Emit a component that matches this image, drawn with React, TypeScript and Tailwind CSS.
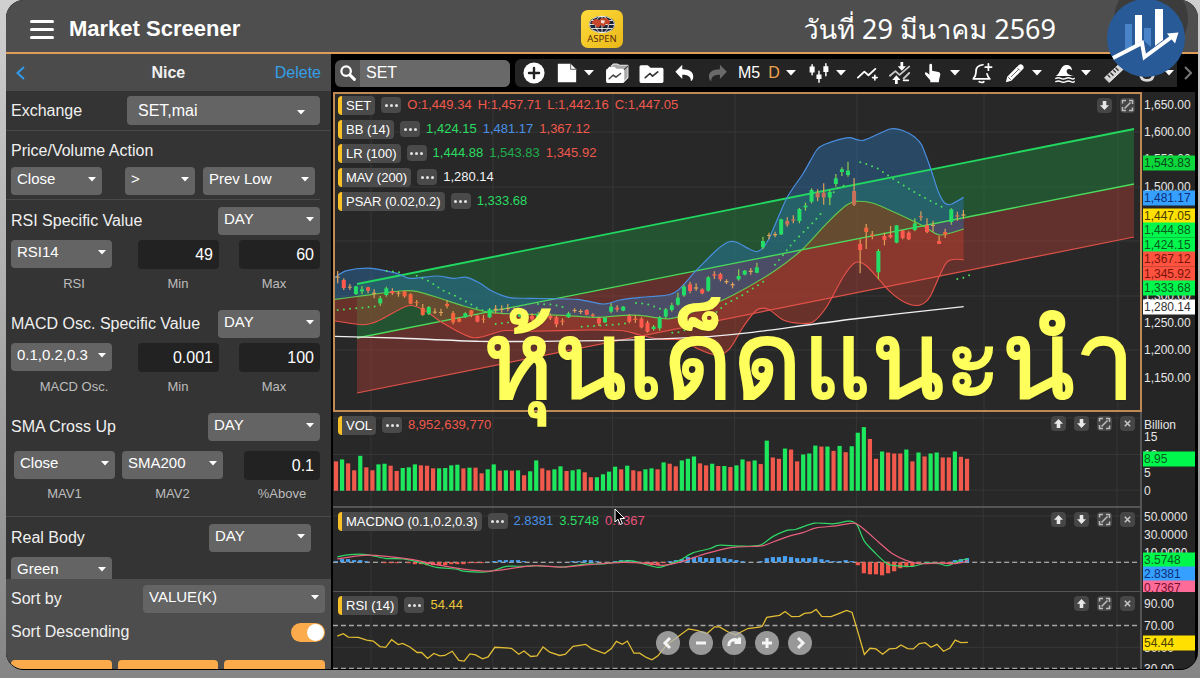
import React from "react";

type Pt = [number, number];

/* ---------- chart data, in plot units ---------- */

const fromA = (pts: Pt[]): Pt[] => pts.map(([x, y]) => [330 + x / 3, 230 + y / 3]);
const fromB = (pts: Pt[]): Pt[] => pts.map(([x, y]) => [640 + x / 3, 110 + y / 3]);
const fromC = (pts: Pt[]): Pt[] => pts.map(([x, y]) => [330 + x / 3, 400 + y / 3]);
const fromD = (pts: Pt[]): Pt[] => pts.map(([x, y]) => [760 + x / 3, 400 + y / 3]);

const line = (pts: Pt[]) => "M" + pts.map(([x, y]) => `${x.toFixed(1)} ${y.toFixed(1)}`).join("L");

const smooth = (p: Pt[], start = "M") => {
  let d = `${start}${p[0][0].toFixed(1)} ${p[0][1].toFixed(1)}`;
  for (let i = 0; i < p.length - 1; i++) {
    const a = p[i - 1] ?? p[i];
    const b = p[i];
    const c = p[i + 1];
    const e = p[i + 2] ?? c;
    const k = 7;
    d += `C${(b[0] + (c[0] - a[0]) / k).toFixed(1)} ${(b[1] + (c[1] - a[1]) / k).toFixed(1)} ${(c[0] - (e[0] - b[0]) / k).toFixed(1)} ${(c[1] - (e[1] - b[1]) / k).toFixed(1)} ${c[0].toFixed(1)} ${c[1].toFixed(1)}`;
  }
  return d;
};

const bbUpper: Pt[] = [
  ...fromA([[10, 146], [50, 122], [125, 115], [200, 130], [240, 145], [320, 138], [370, 145], [410, 142], [450, 160], [490, 185], [540, 203], [600, 205], [740, 208], [820, 222], [870, 210]]),
  ...fromB([[0, 562], [100, 550], [165, 485], [230, 420], [265, 396], [290, 397], [330, 418], [355, 424], [385, 390], [440, 265], [490, 190], [530, 120], [555, 103], [625, 83], [670, 91], [750, 57], [790, 62], [825, 82], [845, 105], [870, 170], [895, 245], [915, 280], [935, 282], [971, 262]]),
];
const bbMid: Pt[] = [
  ...fromA([[10, 209], [100, 197], [210, 183], [260, 184], [330, 205], [400, 228], [480, 247], [560, 252], [700, 256], [800, 262], [880, 256]]),
  ...fromB([[0, 616], [90, 626], [180, 598], [280, 555], [400, 485], [485, 420], [560, 340], [620, 285], [650, 274], [700, 280], [770, 310], [850, 348], [900, 375], [971, 357]]),
];
const bbLower: Pt[] = [
  ...fromA([[10, 272], [100, 284], [150, 270], [235, 227], [290, 245], [340, 280], [430, 323], [520, 302], [600, 304], [780, 300], [880, 302]]),
  ...fromB([[0, 675], [60, 688], [130, 690], [170, 715], [230, 735], [270, 715], [310, 650], [350, 600], [385, 598], [430, 630], [480, 640], [520, 635], [560, 590], [610, 500], [645, 458], [680, 468], [750, 545], [800, 580], [840, 585], [870, 560], [920, 457], [971, 449]]),
];
const mav: Pt[] = [
  ...fromA([[10, 319], [200, 324], [450, 334], [700, 333]]),
  ...fromB([[30, 688], [200, 680], [330, 668], [640, 627], [971, 590]]),
];
const psar: Pt[][] = [
  fromA([[23, 240], [150, 228]]),
  fromA([[170, 123], [225, 128]]),
  fromA([[260, 137], [300, 155], [335, 180], [370, 195], [405, 213], [440, 233], [460, 242]]),
  fromA([[497, 282], [600, 270]]),
  fromA([[624, 222], [670, 224], [715, 235]]),
  fromA([[755, 290], [880, 282], [895, 277]]),
  fromA([[918, 219], [950, 222], [990, 236]]),
  fromB([[97, 668], [115, 667], [152, 655], [188, 632], [225, 610], [260, 580], [300, 560], [370, 515]]),
  fromB([[405, 464], [424, 442], [460, 396], [515, 342], [552, 300]]),
  fromB([[570, 262], [588, 238], [606, 227], [625, 228]]),
  fromB([[661, 157], [680, 162], [716, 177], [734, 190], [770, 214], [825, 247], [860, 267], [916, 296]]),
  fromB([[952, 507], [970, 503], [990, 495]]),
];

type Candle = [string, number, number, number, number];
const early: Candle[] = [
  ["t", 123, 140, 143, 160], ["r", 145, 150, 174, 180], ["t", 162, 170, 173, 180], ["g", 167, 169, 192, 195], ["g", 168, 178, 184, 193],
  ["r", 170, 172, 182, 190], ["t", 178, 188, 192, 205], ["g", 198, 205, 220, 228], ["g", 170, 175, 195, 200], ["r", 175, 183, 190, 195],
  ["t", 183, 188, 191, 200], ["o", 182, 184, 199, 203], ["o", 190, 193, 221, 223], ["o", 210, 216, 219, 228], ["o", 222, 234, 255, 257],
  ["g", 228, 231, 251, 255], ["t", 235, 245, 248, 252], ["t", 236, 246, 249, 258], ["o", 210, 222, 228, 235], ["o", 243, 249, 277, 283],
  ["o", 262, 265, 275, 277], ["g", 247, 250, 262, 264], ["o", 240, 241, 256, 262], ["r", 255, 257, 275, 277], ["o", 255, 266, 269, 279],
  ["g", 234, 238, 262, 265], ["t", 225, 236, 240, 250], ["t", 226, 236, 239, 248], ["t", 222, 234, 237, 244], ["r", 232, 240, 262, 267],
  ["g", 245, 250, 260, 262], ["r", 242, 250, 262, 270], ["r", 250, 258, 268, 272], ["g", 245, 252, 262, 268], ["r", 248, 254, 262, 270],
  ["r", 250, 258, 265, 270], ["r", 258, 262, 283, 292], ["o", 265, 272, 276, 286], ["g", 245, 250, 262, 264], ["t", 235, 240, 243, 248],
  ["t", 238, 243, 246, 252], ["r", 238, 240, 254, 256], ["o", 250, 254, 258, 262], ["r", 260, 265, 280, 288], ["g", 262, 263, 277, 279],
  ["g", 220, 230, 245, 250], ["r", 226, 233, 238, 245], ["g", 228, 230, 242, 244], ["r", 252, 258, 275, 280], ["o", 255, 266, 270, 278],
];
const late: Candle[] = [
  ["r", 622, 626, 652, 655], ["r", 632, 638, 665, 668], ["g", 645, 650, 657, 662], ["g", 618, 622, 655, 662], ["g", 594, 598, 620, 625],
  ["g", 578, 586, 600, 605], ["g", 548, 563, 584, 587], ["g", 525, 530, 556, 560], ["r", 515, 523, 543, 550], ["t", 520, 532, 536, 543],
  ["r", 535, 538, 550, 553], ["g", 498, 502, 542, 545], ["r", 484, 493, 497, 507], ["r", 488, 492, 508, 514], ["t", 508, 513, 517, 522],
  ["t", 517, 522, 526, 535], ["g", 478, 498, 508, 512], ["g", 480, 482, 494, 496], ["t", 474, 482, 486, 494], ["g", 458, 472, 488, 490],
  ["g", 380, 393, 412, 418], ["t", 368, 375, 378, 388], ["t", 365, 372, 376, 382], ["g", 326, 328, 373, 375], ["p", 322, 333, 344, 350],
  ["p", 316, 328, 332, 340], ["g", 294, 297, 333, 340], ["g", 278, 287, 292, 302], ["g", 235, 240, 275, 280], ["p", 238, 248, 262, 274],
  ["p", 220, 248, 262, 284], ["g", 240, 246, 262, 286], ["g", 192, 205, 222, 230], ["g", 172, 178, 186, 198], ["g", 155, 182, 195, 200],
  ["p", 204, 243, 284, 288], ["r", 388, 402, 420, 490], ["o", 342, 353, 366, 417], ["o", 363, 373, 378, 388], ["g", 417, 423, 487, 508],
  ["r", 368, 378, 390, 406], ["r", 348, 375, 382, 385], ["g", 345, 346, 398, 400], ["r", 360, 362, 384, 388], ["r", 364, 368, 388, 390],
  ["g", 325, 340, 360, 364], ["p", 304, 318, 322, 332], ["r", 325, 346, 366, 370], ["t", 332, 345, 348, 365], ["r", 378, 393, 402, 402],
  ["o", 356, 366, 374, 384], ["g", 295, 298, 336, 344], ["p", 305, 316, 320, 332], ["t", 300, 313, 317, 326],
];
const candles = [
  ...early.map(([c, ...v]) => ({ c, v: v.map((n) => 230 + n / 3) })),
  ...late.map(([c, ...v]) => ({ c, v: v.map((n) => 110 + n / 3) })),
];
const candleFill: Record<string, string> = { g: "#22dd66", r: "#ff5a4d", o: "#f4653f", t: "#d9a35c", p: "#c9705a" };

const volumes =
  "R186 G180 R192 R213 G169 R204 R213 G195 G193 R199 R215 G206 G204 G195 R198 R199 R207 G207 G206 G198 G196 R207 G205 R205 R222 G210 G195 R214 G213 R214 G213 R228 G216 G183 R207 R213 G210 G201 R215 G213 G210 R219 R234 G234 G225 G217 G202 R210 G199 R213 R216 G210 G207 R210 G189 R193 R201 G183 G178 G171 R192 R198 G193 R200 G200 R203 G198 G180 R186 G183 R194 G123 R174 R178 G147 R150 R186 G165 G162 G138 R141 G141 R154 G139 R158 G140 G99 G82 R118 R178 G156 R159 R162 R162 G150 R186 G159 R171 G162 G159 R174 R174 G156 R172 R178".split(" ");

const histogram = [
  1, 3, 3, 2, 2, 1, 0, 0, -1, -1, -1, 0, -1, -2, -2, -3, -3, -3, -3, -2, -2, -2, -1, -1, -1, 0, 1, 2, 2, 2, 2, 1, 0, 0, 0, 0, 0, 0, 0, 1, 1, 2, 2, 1, 0, 0,
  1, 2, 2, 1, -1, -2, -3, -3, -1, 1, 2, 3, 5, 5, 5, 4, 4, 5, 4, 3, 2, 1, 0, 0, 1, 4, 5, 5, 6, 5, 4, 4, 4, 5, 3, 2, 1, 1, 2, 1, -3, -11, -12, -12, -13, -11, -9, -6, -5, -4,
  -1, 0, 0, 0, -1, -2, 2, 3, 4,
];

const macdLine: Pt[] = [
  ...fromC([[22, 472], [60, 465], [110, 465], [165, 476], [220, 478], [270, 488], [320, 503], [380, 508], [400, 514], [475, 516], [530, 500], [580, 500], [620, 498], [700, 502], [770, 493], [820, 493], [900, 483], [940, 492], [985, 503], [1010, 497], [1050, 482], [1090, 460], [1140, 448], [1170, 437], [1230, 440]]),
  ...fromD([[0, 438], [40, 412], [80, 394], [110, 390], [165, 372], [220, 374], [265, 366], [280, 367], [295, 380], [315, 425], [350, 463], [380, 490], [400, 497], [460, 500], [500, 490], [540, 492], [565, 498], [600, 483], [626, 478]]),
];
const signalLine: Pt[] = [
  ...fromC([[22, 478], [100, 467], [170, 470], [250, 480], [320, 495], [400, 508], [480, 514], [560, 504], [620, 498], [700, 502], [780, 495], [880, 488], [960, 492], [1000, 497], [1060, 485], [1120, 465], [1200, 445]]),
  ...fromD([[0, 440], [20, 436], [80, 413], [130, 400], [170, 386], [230, 380], [285, 372], [320, 395], [360, 430], [400, 463], [440, 482], [480, 492], [540, 490], [580, 492], [610, 488], [626, 482]]),
];
const rsiLine: Pt[] = [
  ...fromC([[22, 710], [40, 703], [55, 713], [85, 714], [110, 722], [130, 725], [150, 742], [167, 744], [185, 721], [205, 736], [218, 732], [240, 743], [262, 760], [275, 760], [293, 778], [312, 763], [330, 770], [345, 769], [367, 756], [387, 784], [403, 786], [420, 764], [437, 767], [458, 779], [475, 773], [495, 744], [545, 747], [567, 765], [583, 755], [603, 772], [622, 770], [640, 743], [660, 759], [690, 769], [707, 765], [730, 741], [768, 735], [785, 748], [825, 763], [845, 748], [860, 726], [878, 735], [893, 725], [913, 762], [930, 762], [950, 775], [967, 782], [985, 770], [1010, 738], [1050, 708], [1077, 688], [1105, 693], [1132, 703], [1155, 682], [1170, 682], [1195, 697], [1218, 706], [1255, 687]]),
  ...fromD([[0, 683], [8, 680], [22, 653], [60, 647], [77, 635], [97, 651], [120, 650], [135, 641], [155, 639], [170, 629], [187, 650], [215, 651], [240, 641], [262, 632], [278, 638], [295, 695], [315, 766], [332, 747], [350, 749], [370, 765], [390, 749], [410, 747], [425, 737], [445, 748], [462, 749], [480, 733], [498, 730], [515, 744], [533, 735], [553, 756], [572, 746], [588, 722], [605, 730], [626, 729]]),
];

const gridX = [371, 493, 613, 735, 857, 984, 1118];

/* ---------- chart panels ---------- */

function Plot({ left = 333, width = 808, top, height, rows, children }: { left?: number; width?: number; top: number; height: number; rows: number[]; children: React.ReactNode }) {
  return (
    <svg className="absolute inset-0 h-full w-full" viewBox={`${left} ${top} ${width} ${height}`} preserveAspectRatio="none" aria-hidden="true">
      <g stroke="#363636" strokeWidth="1">
        {gridX.map((x) => (
          <path key={x} d={`M${x} ${top}V${top + height}`} />
        ))}
        {rows.map((y) => (
          <path key={y} d={`M333 ${y}H1142`} />
        ))}
      </g>
      {children}
    </svg>
  );
}

function PricePlot() {
  return (
    <Plot left={335} width={805} top={94} height={316} rows={[132, 187, 241, 296, 350]}>
      <path d="M357 284L1134 129V184L357 338Z" fill="#1e7a3a" fillOpacity="0.52" />
      <path d="M357 338L1134 184V237L357 393Z" fill="#a83c34" fillOpacity="0.46" />
      <path d={smooth(bbUpper) + smooth([...bbMid].reverse(), "L") + "Z"} fill="#2c74b8" fillOpacity="0.42" />
      <path d={smooth(bbMid) + smooth([...bbLower].reverse(), "L") + "Z"} fill="#c04030" fillOpacity="0.42" />
      <g fill="none" strokeLinejoin="round">
        <path d="M357 284L1134 129" stroke="#22d860" strokeWidth="1.8" />
        <path d="M357 338L1134 184" stroke="#4ade5c" strokeWidth="1.3" />
        <path d="M357 393L1134 237" stroke="#e05248" strokeWidth="1.2" />
        <path d={smooth(bbUpper)} stroke="#4a8fe0" strokeWidth="1.2" />
        <path d={smooth(bbMid)} stroke="#62c84e" strokeWidth="1.2" />
        <path d={smooth(bbLower)} stroke="#e8524a" strokeWidth="1.1" />
        <path d={smooth(mav)} stroke="#f0eeee" strokeWidth="1.3" />
        {psar.map((p, i) => (
          <path key={i} d={line(p)} stroke="#4ade5c" strokeWidth="2" strokeLinecap="round" strokeDasharray="0 6.2" />
        ))}
      </g>
      {candles.map(({ c, v }, i) => {
        const x = 337.7 + i * 6.075;
        return (
          <g key={i}>
            <path d={`M${x} ${v[0]}V${v[3]}`} stroke={c === "g" ? "#8fc94e" : "#e0a055"} strokeWidth="1.2" />
            <rect x={x - 2} y={v[1]} width="4" height={v[2] - v[1]} fill={candleFill[c]} />
          </g>
        );
      })}
    </Plot>
  );
}

function VolumePlot() {
  return (
    <Plot top={412} height={95} rows={[418, 455, 491]}>
      {volumes.map((v, i) => {
        const h = (275 - Number(v.slice(1))) / 3;
        return <rect key={i} x={333.9 + i * 6.075} y={491.6 - h} width="4.2" height={h} fill={v[0] === "R" ? "#f0594c" : "#1de75c"} />;
      })}
    </Plot>
  );
}

function MacdPlot() {
  return (
    <Plot top={509} height={82} rows={[517]}>
      <path d="M333 562.5H1142" stroke="#c9c9c9" strokeWidth="1" strokeDasharray="5 3" />
      {histogram.map((h, i) => (
        <rect key={i} x={333.9 + i * 6.075} y={h > 0 ? 562.5 - h : 562.5} width="4.2" height={Math.abs(h)} fill={h > 0 ? "#4aa0f0" : "#f0594c"} />
      ))}
      <path d={smooth(macdLine)} fill="none" stroke="#2fd866" strokeWidth="1.2" />
      <path d={smooth(signalLine)} fill="none" stroke="#e8607c" strokeWidth="1.2" />
    </Plot>
  );
}

function RsiPlot() {
  return (
    <Plot top={592} height={78} rows={[648]}>
      <path d="M333 626H1142M333 669.5H1142" stroke="#a9a3a3" strokeWidth="1.4" strokeDasharray="5 3" />
      <path d={line(rsiLine)} fill="none" stroke="#e3bd33" strokeWidth="1.3" />
    </Plot>
  );
}

const tagTone: Record<string, string> = {
  green: "bg-[#00f84c] text-[#0b5a20]",
  lime: "bg-[#0cd83c] text-[#0a4a1a]",
  blue: "bg-[#35a0ff] text-[#0c2f78]",
  yellow: "bg-[#ffe000] text-[#4a3c00]",
  red: "bg-[#ff5340] text-[#7a1208]",
  white: "bg-white text-[#333333]",
  pink: "bg-[#ff6b98] text-[#7a1030]",
};

type Tick = { text: string; at: number; tone?: string };

function Axis({ ticks, height }: { ticks: Tick[]; height: number }) {
  return (
    <div className="relative w-[53px] shrink-0 overflow-hidden bg-[#252525] text-xs leading-[15px] text-[#e6e6e6]">
      {ticks.map((t) => (
        <span
          key={t.text}
          className={`absolute left-px w-[52px] -translate-y-1/2 px-px ${t.tone ? tagTone[t.tone] : ""}`}
          style={{ top: `${(t.at / height) * 100}%` }}
        >
          {t.text}
        </span>
      ))}
    </div>
  );
}

const valueTone: Record<string, string> = {
  red: "text-[#f0594c]",
  green: "text-[#2bdc62]",
  deep: "text-[#1fae4c]",
  blue: "text-[#4a90e6]",
  white: "text-[#f2f2f2]",
  pink: "text-[#e8507c]",
  gold: "text-[#e8c53a]",
};

function Legend({ name, values }: { name: string; values: [string, string][] }) {
  return (
    <div className="flex h-5 items-center gap-1.5 text-[13px] leading-5">
      <button className="h-[19px] rounded border-l-4 border-[#f6c026] bg-[#4b4b4b] px-1 leading-[19px] whitespace-nowrap text-white">{name}</button>
      <button className="flex h-4 w-5 items-center justify-center gap-0.5 rounded bg-[#4a4a4a]" aria-label={`${name} options`}>
        <span className="size-[3px] rounded-full bg-[#e4e4e4]" />
        <span className="size-[3px] rounded-full bg-[#e4e4e4]" />
        <span className="size-[3px] rounded-full bg-[#e4e4e4]" />
      </button>
      {values.map(([v, tone]) => (
        <span key={v} className={`whitespace-nowrap ${valueTone[tone]}`}>
          {v}
        </span>
      ))}
    </div>
  );
}

const controlPath: Record<string, string> = {
  up: "M7.5 3L12 7.8H9.3V12H5.7V7.8H3Z",
  down: "M7.5 12L3 7.2H5.7V3H9.3V7.2H12Z",
};

function Controls({ items }: { items: string[] }) {
  return (
    <div className="absolute top-1 right-[5px] flex gap-2">
      {items.map((k) => (
        <button key={k} aria-label={k} className="flex size-[15px] items-center justify-center rounded-sm bg-[#464646]">
          <svg viewBox="0 0 15 15" className="size-[15px]">
            {controlPath[k] && <path d={controlPath[k]} fill="#e8e8e8" />}
            {k === "expand" && (
              <path d="M2.5 5.5V2.5H6M9 2.5H12.5V6M12.5 9.5V12.5H9M6 12.5H2.5V9M4.5 10.5L10.5 4.5" fill="none" stroke="#bdbdbd" strokeWidth="1.5" />
            )}
            {k === "close" && <path d="M4.8 4.8L10.2 10.2M10.2 4.8L4.8 10.2" stroke="#c8c8c8" strokeWidth="1.5" />}
          </svg>
        </button>
      ))}
    </div>
  );
}

/* ---------- toolbar ---------- */

const Caret = () => (
  <svg viewBox="0 0 10 6" className="h-1.5 w-2.5 shrink-0" aria-hidden="true">
    <path d="M0 0H10L5 5.5Z" fill="#fff" />
  </svg>
);

function Icon({ children, className = "size-[22px]" }: { children: React.ReactNode; className?: string }) {
  return (
    <svg viewBox="0 0 24 24" className={`${className} shrink-0`} fill="none" stroke="#fff" strokeWidth="2" strokeLinecap="round" strokeLinejoin="round" aria-hidden="true">
      {children}
    </svg>
  );
}

function Tool({ label, width = "w-8", caret, children }: { label: string; width?: string; caret?: boolean; children: React.ReactNode }) {
  return (
    <button aria-label={label} className={`${width} flex h-7 shrink-0 items-center justify-center ${caret ? "gap-1.5" : ""} text-[15px] text-white`}>
      {children}
      {caret && <Caret />}
    </button>
  );
}

function Toolbar() {
  return (
    <div className="flex h-[38px] shrink-0 items-center gap-[5px] bg-black pr-1 pl-1">
      <label className="flex h-[27px] w-[175px] shrink-0 items-center overflow-hidden rounded-md bg-[#505050]">
        <span className="flex w-[25px] justify-center">
          <Icon className="size-[18px]">
            <circle cx="9.5" cy="9.5" r="6.3" strokeWidth="3" />
            <path d="M14.5 14.5L20.5 20.5" strokeWidth="4" />
          </Icon>
        </span>
        <span className="sr-only">Symbol</span>
        <input className="h-full min-w-0 flex-1 bg-[#696969] px-1.5 text-base text-white outline-none" defaultValue="SET" />
      </label>
      <div className="flex h-7 min-w-0 flex-1 items-center overflow-hidden rounded-l-md bg-[#242424] pl-[3px]">
        <Tool label="Add">
          <Icon>
            <circle cx="12" cy="12" r="11.500" fill="#fff" stroke="none" />
            <path d="M12 6.5V17.5M6.5 12H17.5" stroke="#222" strokeWidth="2.6" />
          </Icon>
        </Tool>
        <Tool label="New" width="w-[50px]" caret>
          <Icon>
            <path d="M2 2H16L22 8V22H2Z" fill="#fff" stroke="none" />
            <path d="M16 2V8H22" stroke="#555" strokeWidth="1" />
          </Icon>
        </Tool>
        <Tool label="Open all" width="w-[34px]">
          <Icon className="size-[25px]">
            <path d="M6 5L8 3H12L14 4H22V16L18 20" fill="#a8a8a8" stroke="#e8e8e8" strokeWidth="1" />
            <path d="M1 9Q1 7.500 2.500 7.500L4 5.500H9L11 7.500H17Q18.500 7.500 18.500 9V19.500Q18.500 21 17 21H2.500Q1 21 1 19.500Z" fill="#fff" stroke="none" />
            <path d="M18.500 8L22 5" stroke="#444" strokeWidth="1" />
            <path d="M4 17L8 13.500L10.500 15.500L15 12" stroke="#444" strokeWidth="1.400" />
          </Icon>
        </Tool>
        <Tool label="Open" width="w-[34px]">
          <Icon className="size-[25px]">
            <path d="M.5 5.500Q.5 4 2 4H8.500L11 6.500H22Q23.500 6.500 23.500 8V19.500Q23.500 21 22 21H2Q.5 21 .5 19.500Z" fill="#fff" stroke="none" />
            <path d="M6 16L10.500 12L13 14.500L18 10.500" stroke="#333" strokeWidth="1.600" />
          </Icon>
        </Tool>
        <Tool label="Undo" width="w-[34px]">
          <Icon>
            <path d="M9 3V8C17 8 21 11 21 16C21 18 20 20 18.500 21C18.500 16 15 14 9 14V18.500L1.500 10.500Z" fill="#fff" stroke="none" />
          </Icon>
        </Tool>
        <Tool label="Redo" width="w-[34px]">
          <Icon>
            <path d="M13 3V8C5 8 1 11 1 16C1 18 2 20 3.500 21C3.500 16 7 14 13 14V18.500L20.500 10.500Z" fill="#6a6a6a" stroke="none" />
          </Icon>
        </Tool>
        <Tool label="5 minutes" width="w-[26px]">
          <span className="text-base">M5</span>
        </Tool>
        <Tool label="Period" width="w-10" caret>
          <span className="text-base text-[#f0a04a]">D</span>
        </Tool>
        <Tool label="Chart type" width="w-[50px]" caret>
          <Icon>
            <path d="M4.500 3V14M12 10V22M19.500 2V15" strokeWidth="1.600" />
            <path d="M4.500 5V11.500M12 13.500V18.500M19.500 4.500V11" strokeWidth="5.500" strokeLinecap="butt" />
          </Icon>
        </Tool>
        <Tool label="Add indicator">
          <Icon>
            <path d="M1 17L8 10.500L12.500 14.500L20 7.500" strokeWidth="2" />
            <path d="M19.500 14.500V19.500M17 17H22" strokeWidth="1.800" />
          </Icon>
        </Tool>
        <Tool label="Compare">
          <Icon>
            <path d="M1 15L7 10L11.500 14L22 5M16 18L22 12" strokeWidth="2" stroke="#c8c8c8" />
            <path d="M15.500 0V4.500H18.500L14 9.500L9.500 4.500H12.500V0ZM6.500 24V19.500H3.500L8 14.500L12.500 19.500H9.500V24Z" fill="#fff" stroke="none" />
            <path d="M16 20H21" strokeWidth="2" />
          </Icon>
        </Tool>
        <Tool label="Pointer" width="w-[50px]" caret>
          <Icon>
            <path d="M8 3.500Q8 2 9.500 2T11 3.500V9.500L18 11Q20 11.500 20 13.500L18.500 20V22H9V20L3.500 13.500Q2.500 12 4 11.300Q5.500 11 8 14Z" fill="#fff" stroke="none" />
          </Icon>
        </Tool>
        <Tool label="Alert">
          <Icon>
            <path d="M13 3Q5 4 5.500 11Q5.500 15 2.500 18.500H20.500Q18 16 17.500 13M9 21.500Q12 23 14 21.500" strokeWidth="1.900" />
            <path d="M19 2V9M15.500 5.500H22.500" strokeWidth="1.900" />
          </Icon>
        </Tool>
        <Tool label="Draw" width="w-[50px]" caret>
          <Icon>
            <path d="M2 22L3.500 16L16 3.500Q18 1.500 20.500 3.500Q22.500 6 20.500 8L8 20.500Z" fill="#fff" stroke="none" />
            <path d="M15 7L17 9M5 17L7 19M8 16L16 8" stroke="#555" strokeWidth="1" />
          </Icon>
        </Tool>
        <Tool label="Wave" width="w-[50px]" caret>
          <Icon className="size-5">
            <path d="M1 15.500C6 14 6 4 12.500 2.500C17.500 1.500 20.500 5 20.500 9C18.500 6.500 14.500 6.500 14 9.500C13.700 12.500 17 14.500 23 15.500Z" fill="#fff" stroke="none" />
            <path d="M1 18.500Q4 17 7 18.500T13 18.500T19 18.500T23 18.500M1 22.300Q4 20.800 7 22.300T13 22.300T19 22.300T23 22.300" strokeWidth="1.800" />
          </Icon>
        </Tool>
        <Tool label="Measure">
          <Icon>
            <path d="M2 17L17 3L22 8L7 22Z" fill="#d8d8d8" stroke="#f2f2f2" strokeWidth="1" />
            <path d="M5.500 14.500L7.500 16.500M8.500 12L11 14.500M11.500 9L13.500 11M14 6.500L16.500 9" stroke="#333" strokeWidth="1.500" />
          </Icon>
        </Tool>
        <Tool label="Magnet" width="w-[50px]" caret>
          <Icon>
            <path d="M5 5V13Q5 20 12 20T19 13V5" strokeWidth="3" stroke="#d8d8d8" />
          </Icon>
        </Tool>
      </div>
      <button aria-label="More tools" className="flex h-7 w-3 items-center justify-center">
        <svg viewBox="0 0 8 14" className="h-3.5 w-2">
          <path d="M1 1L7 7L1 13" fill="none" stroke="#777" strokeWidth="2" />
        </svg>
      </button>
    </div>
  );
}

/* ---------- screener form ---------- */

function Drop({ label, value, width }: { label: string; value: string; width: string }) {
  return (
    <span className={`relative flex shrink-0 ${width}`}>
      <select aria-label={label} defaultValue={value} className="h-7 w-full appearance-none rounded bg-[#646464] px-1.5 pb-1 text-[15px] text-white outline-none">
        <option>{value}</option>
      </select>
      <svg viewBox="0 0 10 6" className="pointer-events-none absolute top-2.5 right-1.5 h-[5px] w-2" aria-hidden="true">
        <path d="M0 0H10L5 5.500Z" fill="#fff" />
      </svg>
    </span>
  );
}

function Num({ label, value, width }: { label: string; value: string; width: string }) {
  return <input aria-label={label} defaultValue={value} className={`${width} h-[29px] shrink-0 rounded bg-[#222222] px-1.5 text-right text-base text-white outline-none`} />;
}

function Caption({ width, children }: { width: string; children: React.ReactNode }) {
  return <span className={`${width} shrink-0 text-center text-[13px] leading-5 text-[#bdbdbd]`}>{children}</span>;
}

function RangeFilter({ title, name, setting, min, max }: { title: string; name: string; setting: string; min: string; max: string }) {
  return (
    <div className="flex h-[103px] shrink-0 flex-col pt-[7px] pr-[11px] pl-[5px]">
      <div className="mb-[5px] flex h-7 items-center justify-between">
        <span>{title}</span>
        <Drop label={`${title} period`} value="DAY" width="w-[102px]" />
      </div>
      <div className="flex justify-between">
        <Drop label={name} value={setting} width="w-[101px]" />
        <div className="flex gap-5">
          <Num label={`${name} min`} value={min} width="w-[81px]" />
          <Num label={`${name} max`} value={max} width="w-[81px]" />
        </div>
      </div>
      <div className="mt-[5px] flex">
        <Caption width="w-[126px]">{name}</Caption>
        <Caption width="w-[82px]">Min</Caption>
        <span className="flex-1" />
        <Caption width="w-[92px]">Max</Caption>
      </div>
    </div>
  );
}

function Sidebar() {
  return (
    <aside className="flex w-[325px] shrink-0 flex-col overflow-hidden bg-[#343434] text-base text-[#f0f0f0]">
      <div className="flex h-[37px] shrink-0 items-center justify-between bg-[#4b4b4b] pr-2.5 pl-2.5">
        <button aria-label="Back" className="w-[46px]">
          <svg viewBox="0 0 9 14" className="h-3.5 w-[9px]">
            <path d="M8 1L1.500 7L8 13" fill="none" stroke="#2f9bea" strokeWidth="2" />
          </svg>
        </button>
        <h2 className="font-bold">Nice</h2>
        <button className="text-[#359fe8]">Delete</button>
      </div>
      <div className="flex min-h-0 flex-1 flex-col overflow-hidden">
        <div className="flex h-10 shrink-0 items-center justify-between border-b border-[#4a4a4a] pr-[11px] pl-[5px]">
          <span>Exchange</span>
          <span className="relative flex w-[193px]">
            <select aria-label="Exchange" defaultValue="SET,mai" className="h-[29px] w-full appearance-none rounded bg-[#646464] px-[11px] text-base text-white outline-none">
              <option>SET,mai</option>
            </select>
            <svg viewBox="0 0 10 6" className="pointer-events-none absolute top-3.5 right-[15px] h-[5px] w-2" aria-hidden="true">
              <path d="M0 0H10L5 5.500Z" fill="#fff" />
            </svg>
          </span>
        </div>
        <div className="mr-[11px] flex h-[69px] shrink-0 flex-col border-b border-[#4a4a4a] pt-2 pl-[5px]">
          <span className="h-7 leading-6">Price/Volume Action</span>
          <div className="flex">
            <Drop label="First price" value="Close" width="w-[91px]" />
            <span className="w-[23px]" />
            <Drop label="Comparison" value=">" width="w-[70px]" />
            <span className="w-2" />
            <Drop label="Second price" value="Prev Low" width="w-28" />
          </div>
        </div>
        <RangeFilter title="RSI Specific Value" name="RSI" setting="RSI14" min="49" max="60" />
        <RangeFilter title="MACD Osc. Specific Value" name="MACD Osc." setting="0.1,0.2,0.3" min="0.001" max="100" />
        <div className="flex h-[111px] shrink-0 flex-col border-b border-[#4a4a4a] pt-[7px] pr-[11px] pl-[5px]">
          <div className="mb-2.5 flex h-7 items-center justify-between">
            <span>SMA Cross Up</span>
            <Drop label="SMA period" value="DAY" width="w-[112px]" />
          </div>
          <div className="flex justify-between pl-[3px]">
            <div className="flex gap-[7px]">
              <Drop label="MAV1" value="Close" width="w-[101px]" />
              <Drop label="MAV2" value="SMA200" width="w-[101px]" />
            </div>
            <Num label="Percent above" value="0.1" width="w-[76px]" />
          </div>
          <div className="mt-1 flex justify-between pl-[3px]">
            <div className="flex gap-[7px]">
              <Caption width="w-[101px]">MAV1</Caption>
              <Caption width="w-[101px]">MAV2</Caption>
            </div>
            <Caption width="w-[76px]">%Above</Caption>
          </div>
        </div>
        <div className="flex shrink-0 flex-col gap-[5px] pt-[7px] pr-5 pl-[5px]">
          <div className="flex h-7 items-center justify-between">
            <span>Real Body</span>
            <Drop label="Body period" value="DAY" width="w-[102px]" />
          </div>
          <Drop label="Body colour" value="Green" width="w-[101px]" />
        </div>
      </div>
      <div className="h-[90px] shrink-0 overflow-hidden bg-[#4d4d4d] pt-1 pr-1.5 pl-[5px]">
        <div className="flex h-8 items-center justify-between">
          <span>Sort by</span>
          <Drop label="Sort by" value="VALUE(K)" width="w-[182px]" />
        </div>
        <label className="flex h-[34px] items-center justify-between">
          Sort Descending
          <input type="checkbox" defaultChecked className="peer sr-only" />
          <span className="flex h-[19px] w-[34px] items-center justify-end rounded-full bg-[#fbab4b] px-px">
            <span className="size-[17px] rounded-full bg-white" />
          </span>
        </label>
        <div className="mt-[11px] flex gap-1.5">
          <button aria-label="Save" className="h-8 flex-1 rounded bg-[#fbab4b]" />
          <button aria-label="Reset" className="h-8 flex-1 rounded bg-[#fbab4b]" />
          <button aria-label="Search" className="h-8 flex-1 rounded bg-[#fbab4b]" />
        </div>
      </div>
    </aside>
  );
}

/* ---------- page ---------- */

function AspenLogo() {
  return (
    <svg viewBox="0 0 42 38" className="h-[38px] w-[42px] shrink-0" role="img" aria-label="Aspen">
      <defs>
        <linearGradient id="aspen" x1="0" y1="0" x2="1" y2="1">
          <stop offset="0" stopColor="#ffdc3c" />
          <stop offset="1" stopColor="#e8b818" />
        </linearGradient>
      </defs>
      <rect width="42" height="38" rx="7" fill="url(#aspen)" />
      <ellipse cx="21" cy="14.500" rx="13" ry="8.500" fill="#1c2438" />
      <g fill="none" stroke="#f0eee8" strokeWidth="0.900">
        <ellipse cx="21" cy="14.500" rx="12.600" ry="8.200" />
        <ellipse cx="21" cy="14.500" rx="6.500" ry="8.200" />
        <path d="M21 6.300V22.700M8.400 14.500H33.600M10.500 10.500H31.500M10.500 18.500H31.500" />
      </g>
      <path d="M10 13L14 9L18 10L20 8.500L25 8L29 11L28 15L25 13.500L23 17L20 15L17 18L14 15Z" fill="#c8462a" />
      <path d="M20 10L24 10.500L23 13.500L20 13Z" fill="#f0e0d0" />
      <text x="21" y="32" textAnchor="middle" fontSize="9.500" fill="#5a2a10" fontFamily="'Noto Sans', sans-serif">
        ASPEN
      </text>
    </svg>
  );
}

function BrandBadge() {
  return (
    <svg viewBox="0 0 86 78" className="pointer-events-none absolute top-0 right-[7px] z-20 h-[78px] w-[86px]" aria-hidden="true">
      <circle cx="46" cy="19" r="37" fill="#3c3c3c" />
      <circle cx="41" cy="38" r="39" fill="#285a98" />
      <path d="M20 24H27V48L20 51ZM39 28H46V47L39 41Z" fill="#4a84c8" />
      <path d="M30 15H37V41L30 45ZM50 9H58V40L50 46Z" fill="#fff" />
      <path d="M8 58L37 43L39.500 57L68 36" fill="none" stroke="#fff" strokeWidth="4" />
      <path d="M62 33.500L73.500 32.500L70 43.500Z" fill="#fff" />
    </svg>
  );
}

const navPaths = ["M14 7L9 12L14 17", "M7 12H17", "M7 15A5.500 5.500 0 0 1 16.500 10.500M17.500 6.500V11.500H12.500", "M12 7V17M7 12H17", "M10 7L15 12L10 17"];
const navNames = ["Previous", "Zoom out", "Reset view", "Zoom in", "Next"];

export default function App() {
  return (
    <div className="flex h-screen min-w-[900px] bg-linear-to-b from-[#d0d0d0] to-[#858585] pr-0.5 pb-2 pl-1.5 font-['Liberation_Sans',Arial,sans-serif]">
      <div className="relative flex min-w-0 flex-1 flex-col overflow-hidden rounded-[18px] border-b border-black bg-black">
        <header className="grid h-[54px] shrink-0 grid-cols-[1fr_auto_1fr] items-center border-b-2 border-[#e09c58] bg-[#4e4e4e] pt-1.5">
          <div className="flex items-center gap-[15px] pl-6">
            <button aria-label="Menu" className="flex w-6 flex-col gap-[5px]">
              <span className="h-[3px] rounded-full bg-white" />
              <span className="h-[3px] rounded-full bg-white" />
              <span className="h-[3px] rounded-full bg-white" />
            </button>
            <h1 className="text-[22px] leading-7 font-bold whitespace-nowrap text-white">Market Screener</h1>
          </div>
          <AspenLogo />
          <time dateTime="2026-03-29" className="justify-self-end pr-[142px] font-['Noto_Sans','Waree','Loma','Garuda','Noto_Sans_Thai_Looped','Noto_Sans_Thai',sans-serif] text-[27px] leading-10 whitespace-nowrap text-white">
            วันที่ 29 มีนาคม 2569
          </time>
        </header>
        <BrandBadge />
        <div className="flex min-h-0 flex-1">
          <Sidebar />
          <main className="flex min-w-0 flex-1 flex-col">
            <Toolbar />
            <div className="relative grid min-h-0 flex-1 grid-rows-[320fr_96fr_84fr_77fr] pr-[3px] pl-0.5">
              <section className="flex min-h-0">
                <div className="relative min-w-0 flex-1 border-2 border-[#c08a54] bg-[#282828]">
                  <PricePlot />
                  <div className="absolute top-px left-[3px] flex flex-col gap-1">
                    <Legend name="SET" values={[["O:1,449.34", "red"], ["H:1,457.71", "red"], ["L:1,442.16", "red"], ["C:1,447.05", "red"]]} />
                    <Legend name="BB (14)" values={[["1,424.15", "green"], ["1,481.17", "blue"], ["1,367.12", "red"]]} />
                    <Legend name="LR (100)" values={[["1,444.88", "green"], ["1,543.83", "deep"], ["1,345.92", "red"]]} />
                    <Legend name="MAV (200)" values={[["1,280.14", "white"]]} />
                    <Legend name="PSAR (0.02,0.2)" values={[["1,333.68", "green"]]} />
                  </div>
                  <Controls items={["down", "expand"]} />
                </div>
                <Axis
                  height={320}
                  ticks={[
                    { text: "1,650.00", at: 13 }, { text: "1,600.00", at: 40 }, { text: "1,550.00", at: 67 }, { text: "1,500.00", at: 95 },
                    { text: "1,300.00", at: 204 }, { text: "1,250.00", at: 231 }, { text: "1,200.00", at: 258 }, { text: "1,150.00", at: 286 },
                    { text: "1,543.83", at: 71, tone: "lime" }, { text: "1,481.17", at: 106, tone: "blue" }, { text: "1,447.05", at: 124, tone: "yellow" },
                    { text: "1,444.88", at: 138, tone: "green" }, { text: "1,424.15", at: 153, tone: "green" }, { text: "1,367.12", at: 167, tone: "red" },
                    { text: "1,345.92", at: 182, tone: "red" }, { text: "1,333.68", at: 196, tone: "green" }, { text: "1,280.14", at: 215, tone: "white" },
                  ]}
                />
              </section>
              <section className="flex min-h-0">
                <div className="relative min-w-0 flex-1 border-r-2 border-b-2 border-[#555555] bg-[#282828]">
                  <VolumePlot />
                  <div className="absolute top-[3px] left-[5px]">
                    <Legend name="VOL" values={[["8,952,639,770", "red"]]} />
                  </div>
                  <Controls items={["up", "down", "expand", "close"]} />
                </div>
                <Axis
                  height={96}
                  ticks={[{ text: "Billion", at: 13 }, { text: "15", at: 25 }, { text: "10", at: 43 }, { text: "5", at: 61 }, { text: "0", at: 79 }, { text: "8.95", at: 47, tone: "green" }]}
                />
              </section>
              <section className="flex min-h-0">
                <div className="relative min-w-0 flex-1 border-r-2 border-b border-[#555555] bg-[#282828]">
                  <MacdPlot />
                  <div className="absolute top-[3px] left-[5px]">
                    <Legend name="MACDNO (0.1,0.2,0.3)" values={[["2.8381", "blue"], ["3.5748", "green"], ["0.7367", "pink"]]} />
                  </div>
                  <Controls items={["up", "down", "expand", "close"]} />
                </div>
                <Axis
                  height={84}
                  ticks={[
                    { text: "50.0000", at: 9 }, { text: "30.0000", at: 27 }, { text: "10.0000", at: 45 },
                    { text: "3.5748", at: 52, tone: "green" }, { text: "2.8381", at: 66, tone: "blue" }, { text: "0.7367", at: 80, tone: "pink" },
                  ]}
                />
              </section>
              <section className="flex min-h-0">
                <div className="relative min-w-0 flex-1 border-r-2 border-[#555555] bg-[#282828]">
                  <RsiPlot />
                  <div className="absolute top-[3px] left-[5px]">
                    <Legend name="RSI (14)" values={[["54.44", "gold"]]} />
                  </div>
                  <Controls items={["up", "expand", "close"]} />
                </div>
                <Axis
                  height={77}
                  ticks={[{ text: "90.00", at: 12 }, { text: "70.00", at: 34 }, { text: "50.00", at: 56 }, { text: "30.00", at: 77 }, { text: "54.44", at: 51, tone: "yellow" }]}
                />
              </section>
              <p className="pointer-events-none absolute top-[193px] right-[63px] font-['Waree','Loma','Garuda','Noto_Sans_Thai_Looped','Noto_Sans_Thai','Noto_Sans',sans-serif] text-[107px] leading-[150px] whitespace-nowrap text-[#fefe5c] [-webkit-text-stroke:2px_#fefe5c] [text-shadow:0_1px_2px_#00000066]">
                หุ้นเด็ดแนะนำ
              </p>
              <nav aria-label="Chart navigation" className="absolute bottom-3.5 left-[325px] flex gap-[9px]">
                {navPaths.map((d, i) => (
                  <button key={d} aria-label={navNames[i]} className="size-6 rounded-full bg-[#b4b4b4]/80">
                    <svg viewBox="0 0 24 24" className="size-6">
                      <path d={d} fill="none" stroke="#f4f4f4" strokeWidth="3" />
                    </svg>
                  </button>
                ))}
              </nav>
              <svg viewBox="0 0 12 18" className="pointer-events-none absolute top-[416px] left-[283px] h-[18px] w-3" aria-hidden="true">
                <path d="M1 1V14L4 11.200L6.200 16.500L8.400 15.500L6.200 10.500H10.500Z" fill="#000" stroke="#fff" strokeWidth="1" />
              </svg>
            </div>
          </main>
        </div>
      </div>
    </div>
  );
}
